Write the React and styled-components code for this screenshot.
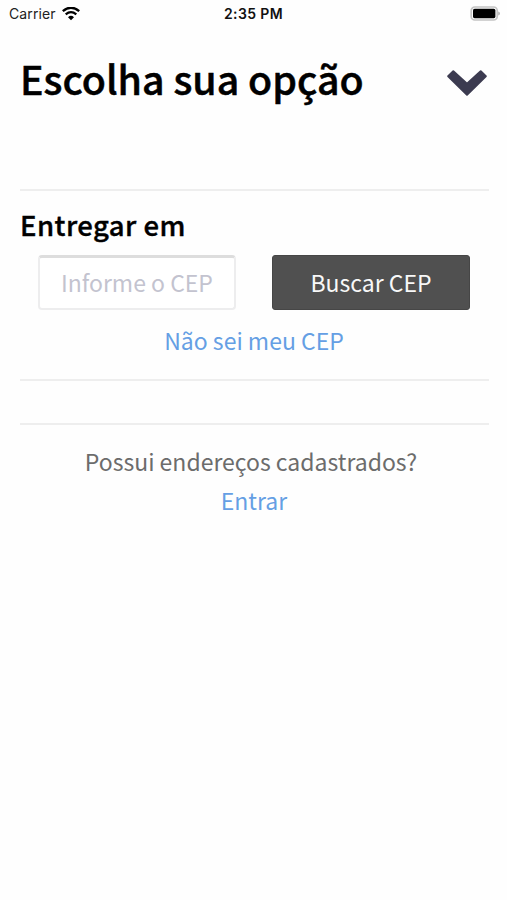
import React from 'react';
import styled, { createGlobalStyle } from "styled-components";

const GlobalStyle = createGlobalStyle`
    *{
        box-sizing:border-box;
    }
    body{
        margin:0px;
        background:#fefefe;
        font-family:"Noto Sans CJK JP", "Noto Sans", sans-serif;
    }
`
const Screen = styled.div`
    width:100%;
    height:900px;
    display:flex;
    flex-flow:column;
`
const StatusBar = styled.div`
    height:28px;
    padding:0px 7px 0px 9px;
    display:grid;
    grid-template-columns:1fr auto 1fr;
    align-items:center;
    font-family:Inter, sans-serif;
    font-size:14px;
    line-height:28px;
    color:#222222;
`
const Carrier = styled.div`
    display:flex;
    align-items:center;
    gap:6px;
    letter-spacing:0.1px;
`
const Clock = styled.div`
    padding-right:2px;
    font-weight:600;
    letter-spacing:0.4px;
    color:#111111;
`
const BatteryIcon = styled.svg`
    justify-self:end;
    margin-bottom:1px;
`
const Content = styled.div`
    padding:22px 18px 0px 20px;
    display:flex;
    flex-flow:column;
`
const Header = styled.div`
    height:139px;
    padding-right:1px;
    display:flex;
    align-items:flex-start;
    justify-content:space-between;
`
const Title = styled.h1`
    margin:0px;
    font-size:39.3px;
    font-weight:500;
    line-height:55px;
    color:#000000;
    -webkit-text-stroke:0.5px #000000;
`
const ChevronIcon = styled.svg`
    margin-top:20px;
`
const Section = styled.div`
    height:${props => props.$height}px;
    padding-top:${props => props.$top}px;
    border-top:2px solid #eeeeee;
    display:flex;
    flex-flow:column;
    align-items:center;
`
const SectionTitle = styled.h2`
    width:100%;
    margin:0px;
    font-size:27.5px;
    font-weight:500;
    letter-spacing:0.45px;
    line-height:40px;
    color:#000000;
    -webkit-text-stroke:0.4px #000000;
`
const Form = styled.div`
    width:100%;
    margin-top:11px;
    padding:0px 19px 0px 18px;
    display:flex;
    justify-content:space-between;
`
const CepInput = styled.input`
    width:198px;
    height:55px;
    padding:0px 0px 2px 21px;
    border:2px solid #ededee;
    border-top:3px solid #dddddd;
    border-radius:4px;
    background:#ffffff;
    font-family:inherit;
    font-size:23px;
    &::placeholder{
        color:#c3c3cf;
        opacity:1;
    }
`
const SearchButton = styled.button`
    width:198px;
    height:55px;
    padding:0px 0px 1px;
    border:1px solid #464646;
    border-radius:3px;
    background:#505050;
    color:#f8f8f8;
    font-family:inherit;
    font-size:23px;
`
const Link = styled.a`
    margin-top:${props => props.$top || 0}px;
    padding-right:1px;
    font-size:23px;
    line-height:38px;
    color:#659fe4;
`
const Question = styled.p`
    margin:0px;
    padding-right:7px;
    font-size:23px;
    line-height:38px;
    color:#6c6c6c;
`

const App = () => {
    return (
        <Screen>
            <GlobalStyle />
            <StatusBar>
                <Carrier>
                    Carrier
                    <svg width="18" height="14" viewBox="0 0 18 14" fill="none" stroke="#000000">
                        <path d="M0.8 4.1 Q9 -2.5 17.2 4.1" strokeWidth="2.5" />
                        <path d="M3.7 7.3 Q9 3 14.3 7.3" strokeWidth="2.3" />
                        <path d="M6 10.2 Q9 7.4 12 10.2 L9 13.2 Z" fill="#000000" stroke="none" />
                    </svg>
                </Carrier>
                <Clock>2:35 PM</Clock>
                <BatteryIcon width="30" height="15" viewBox="0 0 30 15">
                    <rect x="1.2" y="1" width="26" height="13" rx="3.6" fill="#ffffff" stroke="#c4c4c4" strokeWidth="1.7" />
                    <rect x="3" y="2.8" width="22.4" height="9.4" rx="1.6" fill="#000000" />
                    <path d="M28.2 5.4 Q30 6 30 7.5 Q30 9 28.2 9.6 Z" fill="#b4b4b4" />
                </BatteryIcon>
            </StatusBar>
            <Content>
                <Header>
                    <Title>Escolha sua opção</Title>
                    <ChevronIcon width="41" height="27" viewBox="0 0 41 27">
                        <path
                            d="M1.2 6.3 L6.3 1.2 L20 13.8 L33.7 1.2 L38.8 6.3 L20 24.8 Z"
                            fill="#3c3b50"
                            stroke="#3c3b50"
                            strokeWidth="2"
                            strokeLinejoin="round"
                        />
                    </ChevronIcon>
                </Header>
                <Section $height={190} $top={13}>
                    <SectionTitle>Entregar em</SectionTitle>
                    <Form>
                        <CepInput placeholder="Informe o CEP" />
                        <SearchButton>Buscar CEP</SearchButton>
                    </Form>
                    <Link $top={11}>Não sei meu CEP</Link>
                </Section>
                <Section $height={44} $top={0} />
                <Section $height={120} $top={17}>
                    <Question>Possui endereços cadastrados?</Question>
                    <Link $top={1}>Entrar</Link>
                </Section>
            </Content>
        </Screen>
    );
};

export default App;
